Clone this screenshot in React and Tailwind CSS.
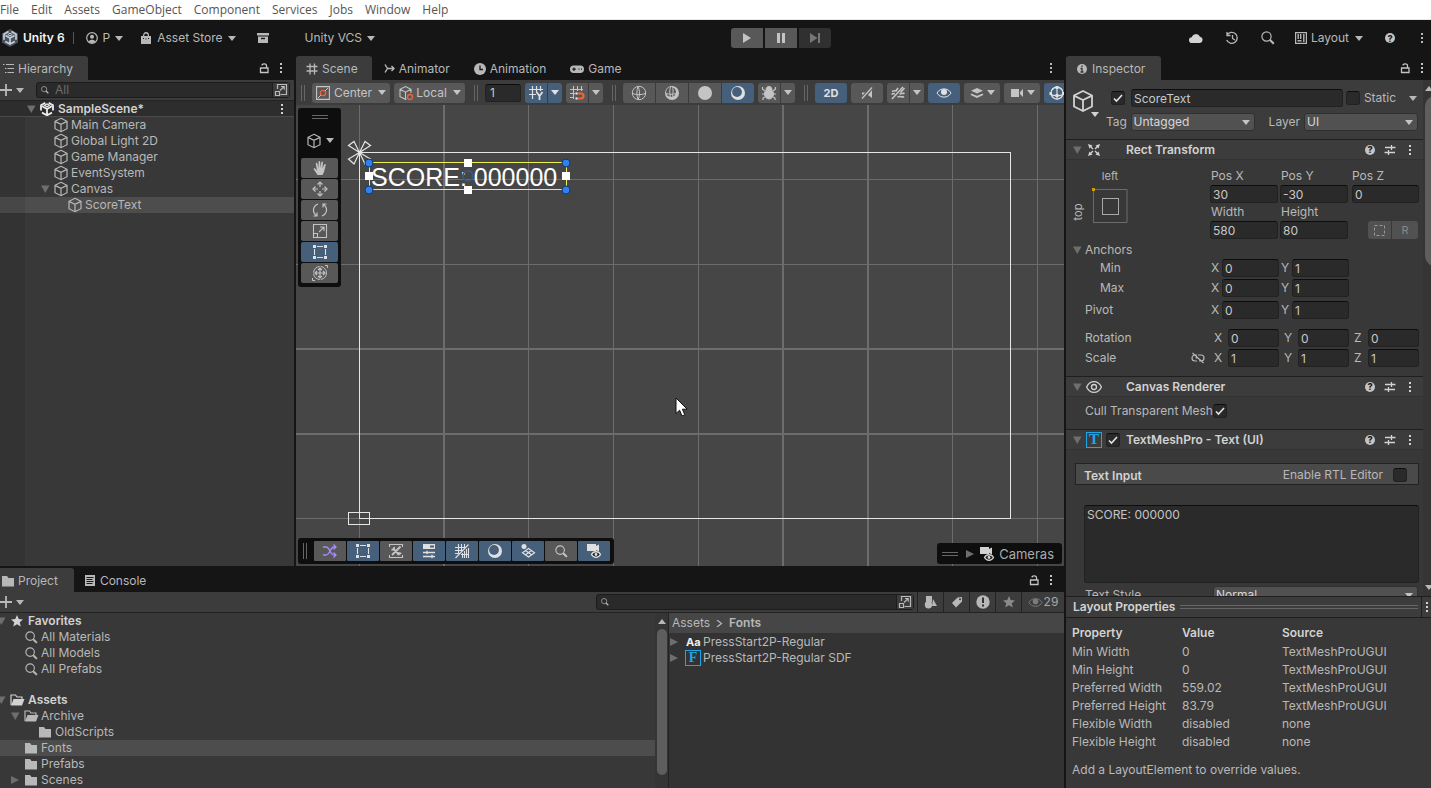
import React from "react";

/* ---------- icons ---------- */

function Icon({ size = 16, box = 16, className = "", children }) {
  return (
    <svg
      width={size}
      height={size}
      viewBox={`0 0 ${box} ${box}`}
      fill="none"
      stroke="currentColor"
      aria-hidden="true"
      className={`shrink-0 ${className}`}
    >
      {children}
    </svg>
  );
}

const Caret = ({ className = "" }) => (
  <svg width="8" height="5" viewBox="0 0 8 5" aria-hidden="true" className={`shrink-0 ${className}`}>
    <path d="M0 0h8L4 5z" fill="currentColor" />
  </svg>
);

const Foldout = ({ open = true }) => (
  <svg width="10" height="10" viewBox="0 0 10 10" aria-hidden="true" className="shrink-0 text-[#6e6e6e]">
    <path d={open ? "M1 1.500h8.500L5.300 9z" : "M1 1v8l8-4z"} fill="currentColor" />
  </svg>
);

const Kebab = ({ className = "" }) => (
  <svg width="4" height="12" viewBox="0 0 4 12" aria-hidden="true" className={`shrink-0 ${className}`}>
    <path d="M1 1h2v2H1zM1 5h2v2H1zM1 9h2v2H1z" fill="currentColor" />
  </svg>
);

const Cube = ({ size = 16 }) => (
  <Icon size={size}>
    <path d="M8 1.300l6 3v7.400l-6 3-6-3V4.300zM2 4.400l6 2.900 6-2.900M8 7.300v7.200" strokeWidth="1.2" />
  </Icon>
);

const Lock = () => (
  <Icon size={12} box={12}>
    <path d="M2.500 6h7.500v4.500H2.500zM4 3.500C4 1.500 8.500 1 8.500 3.800V6" strokeWidth="1.3" />
  </Icon>
);

const Plus = () => (
  <Icon size={12} box={12}>
    <path d="M6 0v12M0 6h12" strokeWidth="1.8" />
  </Icon>
);

const Magnifier = ({ size = 14 }) => (
  <Icon size={size} box={14}>
    <circle cx="5.500" cy="5.500" r="4.600" strokeWidth="1.2" />
    <path d="M8.800 8.800l4 4" strokeWidth="2.2" />
  </Icon>
);

const OpenWindow = () => (
  <Icon size={14} box={14}>
    <path d="M3.500 6V1.500h9v10H6.500M1.500 8.500h4v4h-4zM6 7.500l4-4M7 3.500h3.200v3.200" strokeWidth="1.2" />
  </Icon>
);

const Folder = () => (
  <Icon>
    <path d="M2 3h5l1.500 2H14v8.500H2z" fill="currentColor" stroke="none" />
  </Icon>
);

const FolderOpen = () => (
  <Icon>
    <path d="M2 13V3h4.500L8 5h5v2" strokeWidth="1.2" />
    <path d="M4.500 7H15.500L13 13.500H2z" fill="currentColor" stroke="none" />
  </Icon>
);

const Star = ({ size = 14 }) => (
  <Icon size={size} box={14}>
    <path d="M7 0l2 4.800 5 .4-3.800 3.300 1.200 5L7 10.800 2.600 13.500l1.200-5L0 5.200l5-.4z" fill="currentColor" stroke="none" />
  </Icon>
);

const UnityCube = ({ size = 14 }) => (
  <Icon size={size} box={14}>
    <path d="M5.300.8L1 3.300v5.200M8.700.8L13 3.300v5.200M2 10.600L7 13.300l5-2.700M7 7v5.500M7 7L2.200 4.300M7 7l4.800-2.700" strokeWidth="1.800" />
    <path d="M4.500 3.300L7 1.900l2.500 1.400L7 4.700z" strokeWidth="1.200" />
  </Icon>
);

const Help = () => (
  <span className="flex size-[10px] items-center justify-center rounded-full bg-[#c4c4c4] text-[9px] font-extrabold leading-none text-[#222]">
    ?
  </span>
);

const Presets = () => (
  <Icon size={12} box={12}>
    <path d="M1 3.500h6M8 3.500h3.500M7.500 1v5M.5 8.500H4M5 8.500h6M4.500 6v5" strokeWidth="1.3" />
  </Icon>
);

const Eye = ({ size = 16 }) => (
  <Icon size={size}>
    <path d="M.6 8C4 .8 12 .8 15.400 8 12 15.200 4 15.200.6 8z" strokeWidth="1.3" />
    <circle cx="8" cy="8" r="2.500" strokeWidth="1.3" />
  </Icon>
);

const EyeFilled = ({ size = 16 }) => (
  <Icon size={size}>
    <path d="M1 8c3-5.500 11-5.500 14 0-3 5.500-11 5.500-14 0z" />
    <circle cx="8" cy="7" r="3" fill="currentColor" stroke="none" />
  </Icon>
);

const Moon = () => (
  <Icon>
    <circle cx="8" cy="8" r="7" fill="currentColor" stroke="none" />
    <circle cx="7" cy="7" r="4.900" fill="#46607c" stroke="none" />
  </Icon>
);

const RectTool = () => (
  <Icon>
    <path d="M5 2.500h6M5 13.500h6M2.500 5v6M13.500 5v6" strokeWidth="1.1" />
    <path d="M1 1h3v3H1zM12 1h3v3h-3zM1 12h3v3H1zM12 12h3v3h-3z" fill="currentColor" stroke="none" />
  </Icon>
);

const CameraEye = () => (
  <Icon>
    <path d="M1 1h9v2l3-1.500v7L10 7v1H1z" fill="currentColor" stroke="none" />
    <path d="M5.500 11.500c2-3.700 7-3.700 9 0-2 3.700-7 3.700-9 0z" fill="#222" strokeWidth="1.300" />
    <circle cx="10" cy="11.500" r="1.400" fill="currentColor" stroke="none" />
  </Icon>
);

/* ---------- small shared pieces ---------- */

const Grip = () => <span aria-hidden="true" className="h-4 w-1 shrink-0 border-x border-[#666]" />;

function Tab({ icon, label, active }) {
  return (
    <button
      role="tab"
      aria-selected={active}
      className={`flex h-6 shrink-0 items-center gap-1 pt-px ${
        active ? "rounded-t-[3px] bg-[#3c3c3c]" : ""
      }`}
    >
      {icon}
      {label}
    </button>
  );
}

function PanelButtons() {
  return (
    <div className="ml-auto flex items-center gap-[9px] text-[#c4c4c4]">
      <button aria-label="Lock">
        <Lock />
      </button>
      <button aria-label="More">
        <Kebab />
      </button>
    </div>
  );
}

function ToolButton({ label, on, children, className = "" }) {
  return (
    <button
      aria-label={label}
      className={`flex h-5 shrink-0 items-center justify-center ${
        on ? "bg-[#46607c] text-[#e0e0e0]" : "bg-[#585858] text-[#c4c4c4]"
      } ${className}`}
    >
      {children}
    </button>
  );
}

function Field({ label, value, className = "" }) {
  return (
    <input
      aria-label={label}
      defaultValue={value}
      className={`h-[18px] min-w-0 rounded-[3px] border border-[#212121] border-t-[#0d0d0d] bg-[#2a2a2a] px-0.5 text-[12px] leading-4 text-[#c8c8c8] outline-none ${className}`}
    />
  );
}

function Check({ label, checked = false }) {
  return (
    <span className="relative flex size-[14px] shrink-0">
      <input
        type="checkbox"
        aria-label={label}
        defaultChecked={checked}
        className="size-[14px] appearance-none rounded-[3px] border border-[#212121] border-t-[#0d0d0d] bg-[#2a2a2a]"
      />
      {checked && (
        <svg viewBox="0 0 14 14" fill="none" aria-hidden="true" className="pointer-events-none absolute inset-0">
          <path d="M3 7.500L5.500 10l5.500-6" stroke="#e4e4e4" strokeWidth="1.6" />
        </svg>
      )}
    </span>
  );
}

function Dropdown({ label, value, className = "" }) {
  return (
    <span className={`relative flex h-[18px] shrink-0 items-center ${className}`}>
      <select
        aria-label={label}
        className="h-[18px] w-full appearance-none rounded-[3px] border border-[#303030] bg-[#515151] pl-0.5 text-[12px] leading-4 text-[#d8d8d8]"
      >
        <option>{value}</option>
      </select>
      <Caret className="pointer-events-none absolute right-[5px] text-[#c4c4c4]" />
    </span>
  );
}

/* ---------- top bars ---------- */

const menus = ["File", "Edit", "Assets", "GameObject", "Component", "Services", "Jobs", "Window", "Help"];

function MenuBar() {
  return (
    <nav className="flex h-5 shrink-0 items-center gap-3 border-b border-[#e8e8e8] bg-white font-['Open_Sans',sans-serif] text-[12px] text-[#555]">
      {menus.map((menu) => (
        <button key={menu}>{menu}</button>
      ))}
    </nav>
  );
}

function MainToolbar() {
  return (
    <header className="grid h-9 shrink-0 grid-cols-[1fr_auto_1fr] items-center">
      <div className="flex items-center">
        <svg width="20" height="20" viewBox="0 0 20 20" fill="none" aria-hidden="true">
          <path d="M10 1l8 4.500v9L10 19l-8-4.500v-9z" fill="#4a525e" />
          <path d="M8.500 3.500L4 6.200v5.500M11.500 3.500L16 6.200v5.500M5.200 13.500L10 16l4.800-2.500M10 10v5.500M10 10L5.500 7.500M10 10l4.500-2.500" stroke="#c4ccd8" strokeWidth="1.7" />
          <path d="M7.800 6.500L10 5.200l2.200 1.300L10 7.800z" stroke="#c4ccd8" />
        </svg>
        <span className="ml-[3px] font-semibold text-[#f4f4f4]">Unity 6</span>
        <span className="ml-2 h-3 w-px bg-[#555]" />
        <button className="ml-3 flex items-center gap-[5px]">
          <Icon size={12} box={12}>
            <circle cx="6" cy="6" r="5.300" strokeWidth="1.2" />
            <circle cx="6" cy="4.700" r="2" fill="currentColor" stroke="none" />
            <path d="M2.500 9.500c1.500-2.500 5.500-2.500 7 0L6 11.300z" fill="currentColor" stroke="none" />
          </Icon>
          P
          <Caret />
        </button>
        <button className="ml-[17px] flex items-center gap-[5px]">
          <Icon size={12} box={12}>
            <path d="M1 4h10v8H1z" fill="currentColor" stroke="none" />
            <path d="M3.500 4.500c0-5 5-5 5 0" strokeWidth="1.3" />
            <path d="M3.500 6v1M6 6.500v1M8.500 6v1" stroke="#191919" />
          </Icon>
          Asset Store
          <Caret />
        </button>
        <button aria-label="Package Manager" className="ml-[21px]">
          <Icon size={12} box={12}>
            <path d="M0 1h12v2.500H0zM1 4.500h10V11H1z" fill="currentColor" stroke="none" />
            <path d="M4 6.500h4" stroke="#191919" strokeWidth="1.4" />
          </Icon>
        </button>
        <button className="ml-9 flex items-center gap-[5px]">
          Unity VCS
          <Caret />
        </button>
      </div>

      <div className="flex gap-0.5 pl-[130px]">
        <ToolButton label="Play" className="w-8 rounded-l-[3px]">
          <svg width="8" height="10" viewBox="0 0 8 10" aria-hidden="true"><path d="M0 0l8 5-8 5z" fill="currentColor" /></svg>
        </ToolButton>
        <ToolButton label="Pause" className="w-8">
          <svg width="8" height="10" viewBox="0 0 8 10" aria-hidden="true"><path d="M0 0h3v10H0zM5 0h3v10H5z" fill="currentColor" /></svg>
        </ToolButton>
        <button aria-label="Step" disabled className="flex h-5 w-8 items-center justify-center rounded-r-[3px] bg-[#303030] text-[#777]">
          <svg width="10" height="10" viewBox="0 0 10 10" aria-hidden="true"><path d="M0 0l7.500 5L0 10zM8 0h2v10H8z" fill="currentColor" /></svg>
        </button>
      </div>

      <div className="flex items-center justify-end">
        <button aria-label="Cloud" className="text-[#d2d2d2]">
          <Icon size={14} box={14}>
            <path d="M3 12a2.900 2.900 0 0 1-.2-5.800 4.400 4.400 0 0 1 8.200-.5 3.200 3.200 0 0 1 0 6.300z" fill="currentColor" stroke="none" />
          </Icon>
        </button>
        <button aria-label="History" className="ml-[22px]">
          <Icon size={14} box={14}>
            <path d="M2 4a5.500 5.500 0 1 1-.3 5M2 1v3.500h3.500M7.500 4v3.500l2.500 1.500" strokeWidth="1.3" />
          </Icon>
        </button>
        <button aria-label="Search" className="ml-[22px]">
          <Magnifier />
        </button>
        <button className="ml-5 flex items-center gap-1">
          <Icon size={12} box={12}>
            <path d="M.6.6h10.800v10.800H.6z" strokeWidth="1.2" />
            <path d="M3.200 2v5M5.700 2v5M2.500 8.800h4M8.800 2v8" strokeWidth="1.400" />
          </Icon>
          Layout
          <Caret className="ml-0.5" />
        </button>
        <button aria-label="Help" className="ml-[22px]">
          <Help />
        </button>
        <button aria-label="More" className="ml-[25px] mr-[7px]">
          <Kebab />
        </button>
      </div>
    </header>
  );
}

/* ---------- hierarchy ---------- */

const objects = [
  { name: "Main Camera" },
  { name: "Global Light 2D" },
  { name: "Game Manager" },
  { name: "EventSystem" },
  { name: "Canvas", open: true },
  { name: "ScoreText", child: true, selected: true },
];

function Hierarchy() {
  return (
    <section className="flex w-[294px] shrink-0 flex-col">
      <div role="tablist" className="flex h-6 shrink-0 items-center">
        <div className="flex rounded-tr-[3px] bg-[#3c3c3c] pl-[3px] pr-[15px]">
          <Tab
            active
            label="Hierarchy"
            icon={
              <Icon size={11} box={11}>
                <path d="M0 1.500h1.500M3 1.500h8M2 5.500h1.500M4.500 5.500H11M2 9.500h1.500M4.500 9.500H11" strokeWidth="1.2" />
              </Icon>
            }
          />
        </div>
        <PanelButtons />
        <span className="w-[11px]" />
      </div>
      <div className="flex h-5 shrink-0 items-center bg-[#3c3c3c]">
        <button aria-label="Create" className="flex items-center gap-1">
          <Plus />
          <Caret />
        </button>
        <div className="ml-3 mr-1 flex h-4 flex-1 items-center rounded-[3px] border border-[#1c1c1c] bg-[#2a2a2a] pl-1">
          <Magnifier size={8} />
          <input aria-label="Search hierarchy" placeholder="All" className="ml-1.5 min-w-0 flex-1 bg-transparent outline-none placeholder:text-[#6c6c6c]" />
          <button aria-label="Open search window" className="border-l border-[#1c1c1c] bg-[#3c3c3c] px-px">
            <OpenWindow />
          </button>
        </div>
      </div>
      <div className="flex h-[17px] shrink-0 items-center border-b border-[#4a4a4a] border-t border-t-[#232323] bg-[#2d2d2d] pl-[26px] pr-[10px] font-semibold text-[#d2d2d2]">
        <Foldout />
        <span className="mx-1 flex text-[#eee]">
          <UnityCube />
        </span>
        SampleScene*
        <button aria-label="Scene options" className="ml-auto">
          <Kebab />
        </button>
      </div>
      <div className="flex-1 bg-[linear-gradient(to_right,#333_25px,#383838_25px)]">
        <ul>
          {objects.map(({ name, open, child, selected }) => (
            <li key={name}>
              <button
                className={`flex h-4 w-full items-center ${child ? "pl-[54px]" : "pl-10"} ${
                  selected ? "bg-[linear-gradient(to_right,#474747_25px,#4d4d4d_25px)]" : ""
                }`}
              >
                <span className="w-[13px]">{open && <Foldout />}</span>
                <Cube />
                <span className="ml-0.5">{name}</span>
              </button>
            </li>
          ))}
        </ul>
      </div>
    </section>
  );
}

/* ---------- scene view ---------- */

function SceneToolbar() {
  return (
    <div className="flex h-[25px] shrink-0 items-center overflow-hidden bg-[#3c3c3c] pl-[5px]">
      <Grip />
      <ToolButton label="Pivot mode" className="ml-[7px] w-[78px] gap-1 rounded-[3px]">
        <Icon size={14} box={14}>
          <path d="M.6.6h12.800v12.800H.6z" strokeWidth="1.1" />
          <path d="M9 5l3-3M5 9l-3 3" />
          <circle cx="7" cy="7" r="2.700" stroke="#f0643c" strokeWidth="1.3" />
        </Icon>
        Center
        <Caret className="ml-0.5" />
      </ToolButton>
      <ToolButton label="Pivot rotation" className="ml-1 w-[71px] gap-0.5 rounded-[3px]">
        <Icon>
          <path d="M8.500 14L7.500 14.300 2 11.700V4.300l5.500-2.800L13 4.300V8M2 4.300l5.500 2.900L13 4.300M7.500 7.200v7" strokeWidth="1.1" />
          <circle cx="12" cy="12" r="2.500" stroke="#f0643c" strokeWidth="1.3" />
        </Icon>
        Local
        <Caret className="ml-1" />
      </ToolButton>
      <span className="ml-[9px] flex"><Grip /></span>
      <Field label="Grid size" value="1" className="ml-[7px] h-5 w-9 shrink-0 pl-1" />
      <ToolButton label="Grid" on className="ml-1 w-[22px] rounded-l-[3px]">
        <Icon>
          <path d="M4.500 1v13M8.500 1v6M12.500 1v5M1 4.500h14M1 9.500h7" strokeWidth="1.2" />
          <path d="M8.500 7l3 4 3-4M11.500 11v4" strokeWidth="1.8" />
        </Icon>
      </ToolButton>
      <ToolButton label="Grid options" on className="ml-px w-[14px] rounded-r-[3px]"><Caret /></ToolButton>
      <ToolButton label="Snap" className="ml-1 w-[22px] rounded-l-[3px]">
        <Icon>
          <path d="M4.500 1v13M8.500 1v5M12.500 1v5M1 4.500h13M1 8.500h5M1 12.500h4" strokeWidth="1.1" />
          <path d="M8.500 8.500h3.500a2.500 2.500 0 0 1 0 5H8.500" stroke="#f0643c" strokeWidth="2.2" />
          <path d="M6.500 7.500h2v2h-2zM6.500 12.500h2v2h-2z" fill="#eee" stroke="none" />
        </Icon>
      </ToolButton>
      <ToolButton label="Snap options" className="ml-px w-[14px] rounded-r-[3px]"><Caret /></ToolButton>
      <span className="ml-[9px] flex"><Grip /></span>
      <div className="ml-[7px] flex gap-px">
        <ToolButton label="Wireframe" className="w-8 rounded-l-[3px]">
          <Icon>
            <circle cx="8" cy="8" r="6.700" />
            <path d="M1.500 8.500c4 1.500 9 1.500 13 0M7 1.500c-1.500 4-1.500 9 0 13M7 1.500c2 4 2 9 0 13" />
          </Icon>
        </ToolButton>
        <ToolButton label="Shaded wireframe" className="w-8">
          <Icon>
            <circle cx="8" cy="8" r="7" fill="currentColor" stroke="none" />
            <circle cx="7" cy="7" r="4.900" fill="#585858" stroke="none" />
            <path d="M2 8.500c3.500 1 6.500 1 10 0M6.500 1.500c-1 4-1 7 0 11M8.500 1.500c.8 3 .8 6 0 10" />
          </Icon>
        </ToolButton>
        <ToolButton label="Unlit" className="w-8">
          <span className="size-[14px] rounded-full bg-[#c4c4c4]" />
        </ToolButton>
        <ToolButton label="Shaded" on className="w-8 rounded-r-[3px]"><Moon /></ToolButton>
      </div>
      <ToolButton label="Debug draw" className="ml-1 w-[22px] rounded-l-[3px]">
        <Icon>
          <ellipse cx="8" cy="9" rx="4.500" ry="5" fill="currentColor" />
          <path d="M5 4.500c0-4 6-4 6 0z" fill="currentColor" />
          <path d="M4 6L1.500 4V2M12 6l2.500-2V2M4 9H1M12 9h3M4 12l-2 1v2M12 12l2 1v2" strokeWidth="1.2" />
        </Icon>
      </ToolButton>
      <ToolButton label="Debug options" className="ml-px w-[14px] rounded-r-[3px]"><Caret /></ToolButton>
      <span className="ml-[9px] flex"><Grip /></span>
      <ToolButton label="2D view" on className="ml-[7px] w-8 rounded-[3px] text-[11px] font-bold">2D</ToolButton>
      <ToolButton label="Audio" className="ml-1 w-8 rounded-[3px]">
        <Icon>
          <path d="M3 13.500L13 2.500" strokeWidth="1.3" />
          <path d="M3 7.500h3L4 9.800H3zM13 5v8L9 10z" fill="currentColor" stroke="none" />
        </Icon>
      </ToolButton>
      <ToolButton label="Effects" className="ml-1 w-[22px] rounded-l-[3px]">
        <Icon>
          <path d="M2 14L13 2" strokeWidth="1.5" />
          <path d="M2 6.500c2-1 3-1 5-.5M1.500 9.500c1-1 2-1 3.500-1M8 3L6 6M14.500 3l-4 4.500M9.500 9c2-1 3 0 5-1M7.500 12c3-1.500 4 1 6.500-.5" strokeWidth="1.600" />
        </Icon>
      </ToolButton>
      <ToolButton label="Effects options" className="ml-px w-[14px] rounded-r-[3px]"><Caret /></ToolButton>
      <ToolButton label="Scene visibility" on className="ml-1 w-8 rounded-[3px] text-[#c4c4c4]"><EyeFilled /></ToolButton>
      <ToolButton label="Layers" className="ml-1 w-9 gap-[3px] rounded-[3px]">
        <Icon size={14} box={14}>
          <path d="M7 2l6 2.700-6 2.700-6-2.700z" fill="currentColor" stroke="none" />
          <path d="M1 8.200l6 2.700 6-2.700" strokeWidth="1.8" />
        </Icon>
        <Caret />
      </ToolButton>
      <ToolButton label="Camera settings" className="ml-1 w-9 gap-[3px] rounded-[3px]">
        <Icon size={14} box={14}>
          <path d="M1 3h8v8H1zM10 6l3-3v8l-3-3z" fill="currentColor" stroke="none" />
        </Icon>
        <Caret />
      </ToolButton>
      <ToolButton label="Gizmos" on className="ml-1 w-8 rounded-l-[3px]">
        <Icon className="mr-[7px]">
          <circle cx="8" cy="8" r="6" strokeWidth="1.2" />
          <path d="M8 1v14M1 9c4 2.500 10 2.500 14 0M3 5c3-4 7-4 10 0" strokeWidth="1.2" />
          <path d="M6.500 1h3v3h-3zM6.500 9h3v3h-3zM.5 7h2.500v3H.5zM13 7h2.500v3H13z" fill="currentColor" stroke="none" />
        </Icon>
      </ToolButton>
    </div>
  );
}

const gridX = [63, 147, 232, 317, 402, 486, 571, 656, 741];
const thickX = [147, 486, 571];
const gridY = [74, 159, 243, 328, 413];
const thickY = [243, 328];
const corners = [[73, 58], [270, 58], [73, 85], [270, 85]];
const edges = [[172, 58], [172, 85], [73, 71], [270, 71]];

function SceneCanvas() {
  return (
    <svg width="100%" height="100%" aria-label="Scene" className="absolute inset-0 font-['Liberation_Sans',Arial,sans-serif]">
      <g fill="#6c6c6c">
        {gridX.map((x) => (
          <rect key={x} x={x} y="0" width={thickX.includes(x) ? 2 : 1} height="100%" />
        ))}
        {gridY.map((y) => (
          <rect key={y} x="0" y={y} width="100%" height={thickY.includes(y) ? 2 : 1} />
        ))}
      </g>
      <rect x="63.5" y="47.5" width="651" height="366" fill="none" stroke="#e6e6e6" />
      <rect x="52.5" y="407.5" width="21" height="12" fill="none" stroke="#e6e6e6" />
      <g fill="#464646" stroke="#e6e6e6" strokeWidth="1.200">
        <path d="M63.500 47.500L52.500 40.500l5.500-4zM63.500 47.500L69 36.500l5.500 4zM63.500 47.500L52.500 54l5.500 5zM63.500 47.500L69 59l5.500-5z" />
      </g>
      <text x="75" y="81" fontSize="25" fill="#fff">SCORE: 000000</text>
      <rect x="73.500" y="57.500" width="197" height="27" fill="none" stroke="#f0f050" />
      <circle cx="172" cy="71" r="5" fill="none" stroke="#3a5580" strokeWidth="2" />
      {edges.map(([x, y]) => (
        <rect key={`${x}-${y}`} x={x - 4} y={y - 4} width="8" height="8" fill="#fff" />
      ))}
      {corners.map(([x, y]) => (
        <circle key={`${x}-${y}`} cx={x} cy={y} r="4" fill="#2f80f0" stroke="#12356e" />
      ))}
      <path d="M380 293v15.500l3.600-3.300 2.400 5.800 2.800-1.200-2.400-5.600h4.800z" fill="#fff" stroke="#111" />
    </svg>
  );
}

const tools = [
  {
    name: "View",
    icon: (
      <Icon>
        <path d="M5.500 15L1.800 9.500c-.6-1.200.8-1.800 1.600-.8L5 10.500 3.800 4c-.2-1.400 1.300-1.600 1.600-.3L6.500 8V2c0-1.400 1.600-1.400 1.700 0L8.500 8l.8-5.500c.2-1.300 1.700-1.200 1.600.2L10.500 8.500l1.600-3.800c.5-1.200 1.900-.7 1.600.6L12 12l-1.500 3z" fill="currentColor" stroke="none" />
      </Icon>
    ),
  },
  {
    name: "Move",
    icon: (
      <Icon>
        <path d="M8 2v4M8 10v4M2 8h4M10 8h4" strokeWidth="1.2" />
        <path d="M5.500 3.500L8 1l2.500 2.500M5.500 12.500L8 15l2.500-2.500M3.500 5.500L1 8l2.500 2.500M12.500 5.500L15 8l-2.500 2.500" strokeWidth="1.2" />
      </Icon>
    ),
  },
  {
    name: "Rotate",
    icon: (
      <Icon>
        <path d="M6 2C0 4.500.5 11 4.500 13.500M10 14c6-2.500 5.500-9 1.500-11.500M1.500 14h3.500v-3.500M14.500 2H11v3.500" strokeWidth="1.2" />
      </Icon>
    ),
  },
  {
    name: "Scale",
    icon: (
      <Icon>
        <path d="M1.500 1.500h13v13h-13zM1.500 10.500h4v4M7 9l5-5M8 4h4v4" strokeWidth="1.1" />
      </Icon>
    ),
  },
  { name: "Rect", on: true, icon: <RectTool /> },
  {
    name: "Transform",
    icon: (
      <Icon>
        <circle cx="8" cy="8" r="6.500" strokeDasharray="9 1.200" />
        <path d="M8 3v10M3 8h10M6 5l2-2 2 2M6 11l2 2 2-2M5 6L3 8l2 2M11 6l2 2-2 2" strokeWidth="1.2" />
        <path d="M13 .5h2.500V3M.5 13v2.500H3" />
      </Icon>
    ),
  },
];

function ToolsOverlay() {
  return (
    <div className="absolute left-0.5 top-[3px] flex w-[43px] flex-col items-center rounded-[3px] bg-[#0e0e0e] pb-1">
      <span className="mt-[7px] h-1 w-4 border-y border-[#666]" />
      <button aria-label="Tool settings" className="flex h-[39px] items-center gap-1 pt-1">
        <Cube />
        <Caret />
      </button>
      <div className="flex flex-col gap-px">
        {tools.map((tool) => (
          <ToolButton key={tool.name} label={tool.name} on={tool.on} className="w-[37px] rounded-[2px]">
            {tool.icon}
          </ToolButton>
        ))}
      </div>
    </div>
  );
}

const overlayButtons = [
  {
    name: "Orientation",
    icon: (
      <Icon className="text-[#a78bfa]">
        <path d="M1 4h3c4 0 4 8 8 8h2M1 12h3c4 0 4-8 8-8h2M11.500 1.500L14 4l-2.500 2.500M11.500 9.500L14 12l-2.500 2.500" strokeWidth="1.3" />
      </Icon>
    ),
  },
  { name: "Rect tools", on: true, icon: <RectTool /> },
  {
    name: "Component tools",
    icon: (
      <Icon>
        <path d="M1.500 4V1.500h13V4M1.500 12v2.500h13V12" strokeWidth="1.1" />
        <path d="M3.500 6.500c2 .5 3-1 2.500-2.500M5.500 6l6 6M12.500 3.500L4 12M10 12c0-2 2-2.500 3-1" strokeWidth="1.900" />
      </Icon>
    ),
  },
  {
    name: "Settings",
    on: true,
    icon: (
      <Icon>
        <path d="M2 1h12v5H2z" fill="currentColor" stroke="none" />
        <path d="M9 2.500h4v2H9z" fill="#46607c" stroke="none" />
        <path d="M2 9.500h12M2 13.500h12M6 7.800v3.500M11 11.800v3.500" strokeWidth="1.300" />
      </Icon>
    ),
  },
  {
    name: "Grid and snap",
    on: true,
    icon: (
      <Icon>
        <path d="M4.500 1v10M7.500 1v7M10.500 1v4M1 4.500h11M1 7.500h7M1 10.500h4M1.500 15L14.500 1.500M8.500 10v5M10.500 8v7M12.500 6v9M14.500 5v10M7 11.500h8" strokeWidth="1.1" />
      </Icon>
    ),
  },
  { name: "Draw modes", on: true, icon: <Moon /> },
  {
    name: "Tilemap",
    on: true,
    icon: (
      <Icon>
        <circle cx="4" cy="3.500" r="2.500" fill="currentColor" stroke="none" />
        <path d="M8.500 5.500l6 4.200-6 4.200-6-4.200zM5.500 7.600l6 4.200M11.500 7.600l-6 4.200" strokeWidth="1.200" />
      </Icon>
    ),
  },
  { name: "Search", icon: <Magnifier size={13} /> },
  { name: "Cameras", on: true, icon: <CameraEye /> },
];

function SceneView() {
  return (
    <section className="flex min-w-0 flex-1 flex-col">
      <div role="tablist" className="flex h-6 shrink-0 items-center">
        <div className="flex rounded-t-[3px] bg-[#3c3c3c] pl-[10px] pr-[14px]">
          <Tab
            active
            label="Scene"
            icon={
              <Icon size={12} box={12}>
                <path d="M4 .5v11M8.500 .5v11M.5 3.500h11M.5 8h11" strokeWidth="1.300" />
              </Icon>
            }
          />
        </div>
        <div className="flex gap-6 pl-3">
          <Tab
            label="Animator"
            icon={
              <Icon size={11} box={11}>
                <path d="M1 1.500l2.500 4L1 9.500M3.500 5.500H10M7.500 3L10 5.500 7.500 8" strokeWidth="1.400" />
              </Icon>
            }
          />
          <Tab
            label="Animation"
            icon={
              <Icon size={12} box={12}>
                <circle cx="6" cy="6" r="6" fill="currentColor" stroke="none" />
                <path d="M6 2.500V6.500h3" stroke="#191919" strokeWidth="1.300" />
              </Icon>
            }
          />
          <Tab
            label="Game"
            icon={
              <Icon size={14} box={14}>
                <rect x="0" y="3.500" width="14" height="7.500" rx="3.700" fill="currentColor" stroke="none" />
                <path d="M4 5.500v3.500M2.300 7.200h3.500M8.500 7.200h1M11 7.200h1" stroke="#191919" strokeWidth="1.200" />
              </Icon>
            }
          />
        </div>
        <button aria-label="More" className="ml-auto mr-[11px]">
          <Kebab />
        </button>
      </div>
      <SceneToolbar />
      <div className="relative min-h-0 flex-1 overflow-hidden bg-[#464646]">
        <SceneCanvas />
        <ToolsOverlay />
        <div className="absolute bottom-[2px] left-0.5 flex h-[26px] items-center rounded-[3px] bg-[#0e0e0e] px-[5px] pr-1">
          <Grip />
          <div className="ml-[7px] flex gap-px">
            {overlayButtons.map((button) => (
              <ToolButton key={button.name} label={button.name} on={button.on} className="w-8 rounded-[1px]">
                {button.icon}
              </ToolButton>
            ))}
          </div>
        </div>
        <div className="absolute bottom-[2px] right-[2px] flex h-[21px] items-center rounded-[3px] bg-[#0e0e0e] pl-[5px] pr-[7px] text-[13px] text-[#aaa]">
          <span className="mr-[7px] h-1 w-4 border-y border-[#666]" />
          <Foldout open={false} />
          <span className="mx-1 flex text-[#d2d2d2]">
            <CameraEye />
          </span>
          <span className="pr-px">Cameras</span>
        </div>
      </div>
    </section>
  );
}

/* ---------- project ---------- */

const treeRow = "flex h-4 w-full items-center";

function ProjectTree() {
  return (
    <div className="min-w-0 flex-1 overflow-hidden bg-[#383838]">
      <button className={`${treeRow} font-semibold text-[#d2d2d2]`}>
        <span className="-ml-1 mr-[5px] flex"><Foldout /></span>
        <Star size={12} />
        <span className="ml-[5px]">Favorites</span>
      </button>
      {["All Materials", "All Models", "All Prefabs"].map((name) => (
        <button key={name} className={`${treeRow} gap-[3px] pl-[25px]`}>
          <Magnifier size={13} />
          {name}
        </button>
      ))}
      <button className={`${treeRow} mt-[15px] font-semibold text-[#d2d2d2]`}>
        <span className="-ml-1 mr-[3px] flex"><Foldout /></span>
        <FolderOpen />
        <span className="ml-[3px]">Assets</span>
      </button>
      <button className={`${treeRow} pl-[10px]`}>
        <Foldout />
        <span className="ml-[3px] mr-0.5 flex"><FolderOpen /></span>
        Archive
      </button>
      <button className={`${treeRow} pl-[37px]`}>
        <Folder />
        <span className="ml-0.5">OldScripts</span>
      </button>
      <button className={`${treeRow} bg-[#4d4d4d] pl-[23px]`}>
        <Folder />
        <span className="ml-0.5">Fonts</span>
      </button>
      <button className={`${treeRow} pl-[23px]`}>
        <Folder />
        <span className="ml-0.5">Prefabs</span>
      </button>
      <button className={`${treeRow} pl-[10px]`}>
        <Foldout open={false} />
        <span className="ml-[3px] mr-0.5 flex"><Folder /></span>
        Scenes
      </button>
    </div>
  );
}

const filterButton = "flex h-full w-[26px] items-center justify-center border-l border-[#232323]";

function Project() {
  return (
    <section className="flex h-[220px] shrink-0 flex-col">
      <div role="tablist" className="flex h-6 shrink-0 items-center">
        <div className="flex rounded-tr-[3px] bg-[#3c3c3c] pr-4">
          <Tab active label="Project" icon={<span className="-mr-0.5 flex"><Folder /></span>} />
        </div>
        <span className="ml-[11px] flex">
          <Tab
            label="Console"
            icon={
              <Icon size={11} box={11}>
                <path d="M0 0h10v11H0z" fill="currentColor" stroke="none" />
                <path d="M1.500 2.500h7M1.500 4.500h6M1.500 6.500h7M1.500 8.500h6" stroke="#191919" />
              </Icon>
            }
          />
        </span>
        <PanelButtons />
        <span className="w-[11px]" />
      </div>
      <div className="flex h-[21px] shrink-0 items-center border-b border-[#232323] bg-[#3c3c3c]">
        <button aria-label="Create" className="flex items-center gap-1">
          <Plus />
          <Caret />
        </button>
        <div className="ml-auto mr-[3px] flex h-4 w-[318px] items-center rounded-[3px] border border-[#1c1c1c] bg-[#2a2a2a] pl-1">
          <Magnifier size={8} />
          <input aria-label="Search project" className="min-w-0 flex-1 bg-transparent outline-none" />
          <button aria-label="Open search window" className="border-l border-[#1c1c1c] bg-[#3c3c3c] px-px">
            <OpenWindow />
          </button>
        </div>
        <button aria-label="Filter by type" className={filterButton}>
          <Icon size={13} box={13}>
            <path d="M2 0h6v6H2zM9 3l4 7H8z" fill="currentColor" stroke="none" />
            <circle cx="4.500" cy="8.800" r="3.700" fill="currentColor" stroke="none" />
          </Icon>
        </button>
        <button aria-label="Filter by label" className={filterButton}>
          <Icon size={12} box={12}>
            <path d="M6.500 1.500L11 1v4.500L5 11.500 1 7z" fill="currentColor" stroke="none" />
            <circle cx="9" cy="3.200" r="1" fill="#3c3c3c" stroke="none" />
          </Icon>
        </button>
        <button aria-label="Filter by import result" className={filterButton}>
          <Icon size={14} box={14}>
            <circle cx="7" cy="7" r="6.700" fill="currentColor" stroke="none" />
            <path d="M7 2.500V8M7 9.500v2" stroke="#333" strokeWidth="2" />
          </Icon>
        </button>
        <button aria-label="Save search" className={`${filterButton} text-[#8a8a8a]`}>
          <Star size={12} />
        </button>
        <button aria-label="Hidden packages" className="flex h-full w-[43px] items-center justify-center gap-px border-l border-[#232323] text-[#a8a8a8]">
          <span className="flex text-[#7a7a7a]"><EyeFilled size={15} /></span>
          29
        </button>
      </div>
      <div className="flex min-h-0 flex-1">
        <div className="flex w-[669px] shrink-0 border-r border-[#232323]">
          <ProjectTree />
          <div className="flex w-[13px] shrink-0 flex-col items-center bg-[#353535] pt-1.5">
            <Caret className="rotate-180" />
            <div className="mt-[5px] h-[146px] w-[10px] rounded-full bg-[#5e5e5e]" />
          </div>
        </div>
        <div className="min-w-0 flex-1 bg-[#333]">
          <div className="flex h-5 items-center gap-1.5 bg-[#464646] pl-[3px]">
            <a href="#assets">Assets</a>
            <Icon size={7} box={7}>
              <path d="M1 0l4.500 3.500L1 7" strokeWidth="1.2" />
            </Icon>
            <a href="#fonts" className="font-semibold">Fonts</a>
          </div>
          <button className={`${treeRow} mt-px`}>
            <Foldout open={false} />
            <span className="ml-[6px] w-[18px] pl-px text-left text-[11px] font-bold text-[#eee]">Aa</span>
            <span>PressStart2P-Regular</span>
          </button>
          <button className={treeRow}>
            <Foldout open={false} />
            <span className="ml-[6px] mr-0.5 flex size-4 items-center justify-center border border-[#1ea7e8] font-['Liberation_Serif',serif] text-[14px] font-bold leading-none text-[#1ea7e8]">
              F
            </span>
            <span>PressStart2P-Regular SDF</span>
          </button>
        </div>
      </div>
    </section>
  );
}

/* ---------- inspector ---------- */

function ComponentHeader({ icon, title }) {
  return (
    <div className="flex h-[21px] shrink-0 items-center border-b border-t border-b-[#323232] border-t-[#1f1f1f] bg-[#3c3c3c] pl-1.5 pr-[11px] font-semibold text-[#d2d2d2]">
      <Foldout />
      <span className="ml-1 flex w-10 items-center gap-1">{icon}</span>
      {title}
      <div className="ml-auto flex items-center">
        <button aria-label={`${title} help`} className="mr-[9px]"><Help /></button>
        <button aria-label={`${title} presets`} className="mr-3"><Presets /></button>
        <button aria-label={`${title} menu`}><Kebab /></button>
      </div>
    </div>
  );
}

/* one label column and three 70px value columns */
const propertyRow = "grid h-[18px] grid-cols-[minmax(0,1fr)_70px_70px_70px] items-center pr-[3px]";

function PairRow({ label, x, y, indent }) {
  return (
    <div className={propertyRow}>
      <span className={indent ? "pl-[34px]" : "pl-[19px]"}>{label}</span>
      <label className="flex items-center">
        <span className="w-3 pl-px">X</span>
        <Field label={`${label} X`} value={x} className="w-[57px]" />
      </label>
      <label className="flex items-center">
        <span className="w-3 pl-px">Y</span>
        <Field label={`${label} Y`} value={y} className="w-[57px]" />
      </label>
    </div>
  );
}

function TripleRow({ label, value, icon }) {
  return (
    <div className={propertyRow}>
      <span className="flex items-center justify-between pl-[19px] pr-[5px]">
        {label}
        {icon}
      </span>
      {["X", "Y", "Z"].map((axis) => (
        <label key={axis} className="flex items-center">
          <span className="w-[18px] pl-1">{axis}</span>
          <Field label={`${label} ${axis}`} value={value} className="w-[51px]" />
        </label>
      ))}
    </div>
  );
}

function RectTransform() {
  return (
    <div className="h-[216px] shrink-0 pt-[7px]">
      <div className="flex h-[72px] pr-1">
        <button aria-label="Anchor presets" className="grid min-w-0 flex-1 grid-cols-[26px_36px] grid-rows-[18px_54px] text-[11px]">
          <span className="col-start-2 self-center">left</span>
          <span className="col-start-1 row-start-2 -rotate-90 self-center pb-0.5">top</span>
          <svg width="36" height="36" viewBox="0 0 36 36" fill="none" aria-hidden="true" className="mt-[3px]">
            <path d="M1 1.500h34v33H1.500" stroke="#6c6c6c" />
            <path d="M34 1.500H1.500V35" stroke="#b04c4c" />
            <rect x="10.500" y="10.500" width="16" height="16" stroke="#a8a8a8" />
            <rect x="0" y="0" width="3" height="3" fill="#d09a00" />
          </svg>
        </button>
        <div className="grid grid-cols-[70px_72px_67px] grid-rows-[18px_18px_18px_18px] items-center">
          <span className="pl-px">Pos X</span>
          <span className="pl-px">Pos Y</span>
          <span>Pos Z</span>
          <Field label="Pos X" value="30" className="w-[68px]" />
          <Field label="Pos Y" value="-30" className="w-[68px]" />
          <Field label="Pos Z" value="0" className="w-[67px]" />
          <span className="pl-px">Width</span>
          <span className="pl-px">Height</span>
          <span />
          <Field label="Width" value="580" className="w-[68px]" />
          <Field label="Height" value="80" className="w-[68px]" />
          <div className="flex justify-end gap-px pr-px">
            <button aria-label="Blueprint mode" className="flex h-[18px] w-[23px] items-center justify-center rounded-l-[3px] bg-[#515151] text-[#999]">
              <Icon size={11} box={11}>
                <path d="M.5.5h10v10H.5z" strokeDasharray="3 2" />
              </Icon>
            </button>
            <button aria-label="Raw edit mode" className="h-[18px] w-[26px] rounded-r-[3px] bg-[#515151] text-[11px] text-[#888]">R</button>
          </div>
        </div>
      </div>
      <div className="flex h-5 items-center gap-[3px] pl-1.5 pt-px">
        <Foldout />
        Anchors
      </div>
      <div className="flex flex-col gap-0.5">
        <PairRow label="Min" x="0" y="1" indent />
        <PairRow label="Max" x="0" y="1" indent />
      </div>
      <div className="mt-1">
        <PairRow label="Pivot" x="0" y="1" />
      </div>
      <div className="mt-[10px] flex flex-col gap-0.5">
        <TripleRow label="Rotation" value="0" />
        <TripleRow
          label="Scale"
          value="1"
          icon={
            <Icon size={14} box={14}>
              <path d="M6 4H4a3 3 0 0 0 0 6h2M7 4h3a3 3 0 0 1 0 6H8M4.500 7h2M1.500 2l11 10" strokeWidth="1.2" />
            </Icon>
          }
        />
      </div>
    </div>
  );
}

const properties = [
  ["Min Width", "0", "TextMeshProUGUI"],
  ["Min Height", "0", "TextMeshProUGUI"],
  ["Preferred Width", "559.02", "TextMeshProUGUI"],
  ["Preferred Height", "83.79", "TextMeshProUGUI"],
  ["Flexible Width", "disabled", "none"],
  ["Flexible Height", "disabled", "none"],
];

function LayoutProperties() {
  return (
    <div className="flex h-[192px] shrink-0 flex-col border-t border-[#1f1f1f] bg-[#383838]">
      <div className="flex h-[21px] shrink-0 items-center border-b border-[#1f1f1f] bg-[#3c3c3c] pl-[7px] font-semibold text-[#d2d2d2]">
        Layout Properties
        <span className="mx-[3px] ml-[5px] h-1 flex-1 border-y border-[#666]" />
        <button aria-label="Preview options" className="flex h-full items-center border-l border-[#1f1f1f] px-0.5 pl-[3px]">
          <Kebab />
        </button>
      </div>
      <table className="mt-[5px] ml-1.5 w-[340px] table-fixed border-collapse text-left">
        <thead>
          <tr className="h-5 text-[#d2d2d2]">
            <th className="w-[110px] p-0 font-semibold leading-4">Property</th>
            <th className="w-[100px] p-0 font-semibold leading-4">Value</th>
            <th className="p-0 font-semibold leading-4">Source</th>
          </tr>
        </thead>
        <tbody>
          {properties.map((row) => (
            <tr key={row[0]} className="h-[18px]">
              {row.map((cell, i) => (
                <td key={i} className="p-0 leading-4">{cell}</td>
              ))}
            </tr>
          ))}
        </tbody>
      </table>
      <p className="mt-[11px] pl-1.5">Add a LayoutElement to override values.</p>
    </div>
  );
}

function Inspector() {
  return (
    <aside className="flex w-[365px] shrink-0 flex-col">
      <div role="tablist" className="flex h-6 shrink-0 items-center">
        <div className="flex rounded-t-[3px] bg-[#3c3c3c] pl-[11px] pr-4">
          <Tab
            active
            label="Inspector"
            icon={
              <Icon size={10} box={10} className="mr-px">
                <circle cx="5" cy="5" r="5" fill="currentColor" stroke="none" />
                <path d="M5 1.500v1.500M3.500 4.500H5V8M3.500 8h3" stroke="#333" strokeWidth="1.300" />
              </Icon>
            }
          />
        </div>
        <PanelButtons />
        <span className="w-[7px]" />
      </div>

      <div className="flex min-h-0 flex-1 bg-[#383838]">
        <div className="flex min-w-0 flex-1 flex-col overflow-hidden">
          <div className="flex h-[59px] shrink-0 bg-[#3c3c3c] pl-[5px] pr-[5px] pt-[9px]">
            <button aria-label="Object icon" className="relative size-6 text-[#d2d2d2]">
              <Cube size={24} />
              <Caret className="absolute -bottom-1 -right-1" />
            </button>
            <div className="ml-4 flex min-w-0 flex-1 flex-col gap-1.5">
              <div className="flex items-center">
                <Check label="Active" checked />
                <Field label="Name" value="ScoreText" className="ml-1.5 mr-[3px] flex-1" />
                <label className="flex items-center gap-1">
                  <Check label="Static" />
                  Static
                </label>
                <button aria-label="Static flags" className="ml-[13px] mr-px"><Caret /></button>
              </div>
              <div className="flex items-center">
                <span className="-ml-[5px] w-[25px]">Tag</span>
                <Dropdown label="Tag" value="Untagged" className="w-[124px]" />
                <span className="ml-[14px] w-9">Layer</span>
                <Dropdown label="Layer" value="UI" className="w-[114px]" />
              </div>
            </div>
          </div>

          <ComponentHeader
            title="Rect Transform"
            icon={
              <span className="ml-0.5 flex">
                <Icon size={12} box={12}>
                  <path d="M0 0l4.500 1.500L1.500 4.500zM12 0l-4.500 1.500 3 3zM0 12l1.500-4.500 3 3zM12 12l-1.500-4.500-3 3z" fill="currentColor" stroke="none" />
                  <path d="M2 2l3 3M10 2L7 5M2 10l3-3M10 10L7 7" strokeWidth="1.300" />
                </Icon>
              </span>
            }
          />
          <RectTransform />

          <ComponentHeader title="Canvas Renderer" icon={<Eye />} />
          <label className="flex h-8 shrink-0 items-center pb-1 pl-[19px]">
            Cull Transparent Mesh
            <Check label="Cull Transparent Mesh" checked />
          </label>

          <ComponentHeader
            title="TextMeshPro - Text (UI)"
            icon={
              <>
                <span className="flex size-4 items-center justify-center border border-[#1ea7e8] font-['Liberation_Serif',serif] text-[15px] font-bold leading-none text-[#1ea7e8]">
                  T
                </span>
                <Check label="Enable TextMeshPro" checked />
              </>
            }
          />
          <div className="ml-[9px] mr-1 mt-[13px] flex h-[22px] shrink-0 items-end border border-[#232323] bg-[#4a4a4a] pl-2 pr-[11px]">
            <span className="font-semibold text-[#d2d2d2]">Text Input</span>
            <label className="ml-auto flex items-center gap-[10px] pb-px">
              Enable RTL Editor
              <Check label="Enable RTL Editor" />
            </label>
          </div>
          <textarea
            aria-label="Text"
            defaultValue="SCORE: 000000"
            className="ml-[18px] mr-1 mt-5 h-[78px] shrink-0 resize-none rounded-[3px] border border-[#212121] border-t-[#0d0d0d] bg-[#2a2a2a] px-0.5 pt-px leading-4 text-[#c4c4c4] outline-none"
          />
          <div className="mt-[3px] flex shrink-0 items-center pl-[19px] pr-[5px]">
            <span className="w-32">Text Style</span>
            <Dropdown label="Text Style" value="Normal" className="flex-1" />
          </div>
        </div>
        <div className="flex w-2 shrink-0 flex-col overflow-hidden bg-[#353535] pt-1.5">
          <Caret className="ml-0.5 rotate-180" />
          <div className="ml-0.5 mt-[5px] h-[170px] w-[10px] rounded-l-full bg-[#5e5e5e]" />
          <Caret className="mb-1.5 ml-0.5 mt-auto" />
        </div>
      </div>
      <LayoutProperties />
    </aside>
  );
}

function App() {
  return (
    <div className="flex h-screen flex-col overflow-hidden bg-[#151515] font-['Inter',sans-serif] text-[12px] leading-4 text-[#b8b8b8]">
      <MenuBar />
      <MainToolbar />
      <main className="flex min-h-0 flex-1 gap-0.5">
        <div className="flex min-w-0 flex-1 flex-col gap-0.5">
          <div className="flex min-h-0 flex-1 gap-0.5">
            <Hierarchy />
            <SceneView />
          </div>
          <Project />
        </div>
        <Inspector />
      </main>
    </div>
  );
}

export default App;
